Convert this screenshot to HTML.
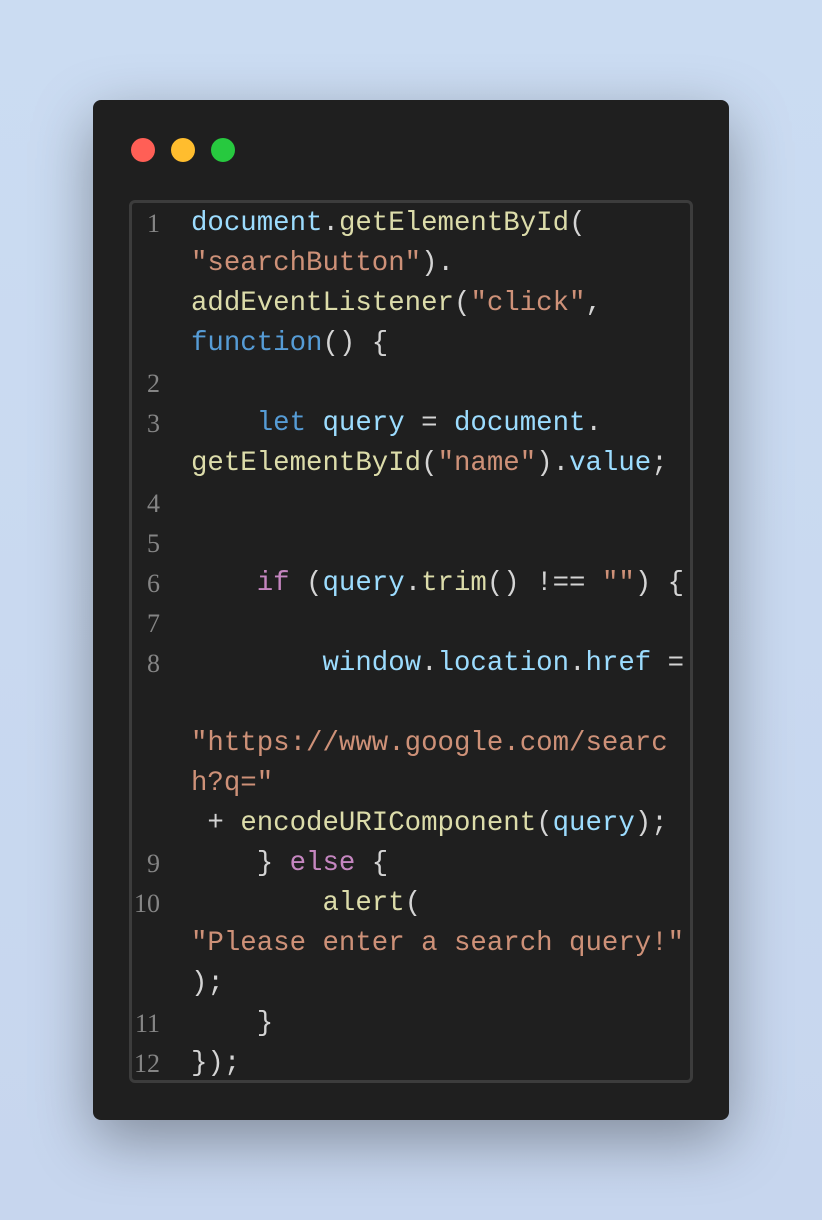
<!DOCTYPE html>
<html><head><meta charset="utf-8"><style>
html,body{margin:0;padding:0;}
body{width:822px;height:1220px;background:linear-gradient(180deg,#cbdcf2,#c7d6ee);position:relative;overflow:hidden;}
.win{position:absolute;left:93px;top:100px;width:636px;height:1020px;background:#1f1f1f;border-radius:8px;box-shadow:0 20px 60px rgba(0,0,0,.35);}
.dot{position:absolute;top:38px;width:24px;height:24px;border-radius:50%;}
.box{position:absolute;left:36px;top:100px;width:558px;height:877px;border:3px solid #3c3c3c;border-radius:6px;}
.n{position:absolute;width:70px;text-align:right;left:0;font-family:"Liberation Serif",serif;font-size:26px;color:#858585;height:40px;line-height:40px;}
.c{position:absolute;left:191px;font-family:"Liberation Mono",monospace;font-size:27.4px;color:#d4d4d4;height:40px;line-height:40px;white-space:pre;}
.v{color:#9cdcfe}.f{color:#dcdcaa}.s{color:#ce9178}.k{color:#569cd6}.p{color:#c586c0}
</style></head><body>
<div class="win">
<div class="dot" style="left:38px;background:#ff5f56"></div>
<div class="dot" style="left:78px;background:#ffbd2e"></div>
<div class="dot" style="left:118px;background:#27c93f"></div>
<div class="box"></div>
</div>
<div style="position:absolute;left:0;top:204px;width:822px;">
<div class="n" style="top:0;left:90px">1</div>
<div class="c" style="top:0"><span class="v">document</span>.<span class="f">getElementById</span>(</div>
<div class="c" style="top:40px"><span class="s">"searchButton"</span>).</div>
<div class="c" style="top:80px"><span class="f">addEventListener</span>(<span class="s">"click"</span>,</div>
<div class="c" style="top:120px"><span class="k">function</span>() {</div>
<div class="n" style="top:160px;left:90px">2</div>
<div class="n" style="top:200px;left:90px">3</div>
<div class="c" style="top:200px">    <span class="k">let</span> <span class="v">query</span> = <span class="v">document</span>.</div>
<div class="c" style="top:240px"><span class="f">getElementById</span>(<span class="s">"name"</span>).<span class="v">value</span>;</div>
<div class="n" style="top:280px;left:90px">4</div>
<div class="n" style="top:320px;left:90px">5</div>
<div class="n" style="top:360px;left:90px">6</div>
<div class="c" style="top:360px">    <span class="p">if</span> (<span class="v">query</span>.<span class="f">trim</span>() !== <span class="s">""</span>) {</div>
<div class="n" style="top:400px;left:90px">7</div>
<div class="n" style="top:440px;left:90px">8</div>
<div class="c" style="top:440px">        <span class="v">window</span>.<span class="v">location</span>.<span class="v">href</span> =</div>
<div class="c" style="top:520px"><span class="s">"https://www.google.com/searc</span></div>
<div class="c" style="top:560px"><span class="s">h?q="</span></div>
<div class="c" style="top:600px"> + <span class="f">encodeURIComponent</span>(<span class="v">query</span>);</div>
<div class="n" style="top:640px;left:90px">9</div>
<div class="c" style="top:640px">    } <span class="p">else</span> {</div>
<div class="n" style="top:680px;left:90px">10</div>
<div class="c" style="top:680px">        <span class="f">alert</span>(</div>
<div class="c" style="top:720px"><span class="s">"Please enter a search query!"</span></div>
<div class="c" style="top:760px">);</div>
<div class="n" style="top:800px;left:90px">11</div>
<div class="c" style="top:800px">    }</div>
<div class="n" style="top:840px;left:90px">12</div>
<div class="c" style="top:840px">});</div>
</div>
</body></html>
